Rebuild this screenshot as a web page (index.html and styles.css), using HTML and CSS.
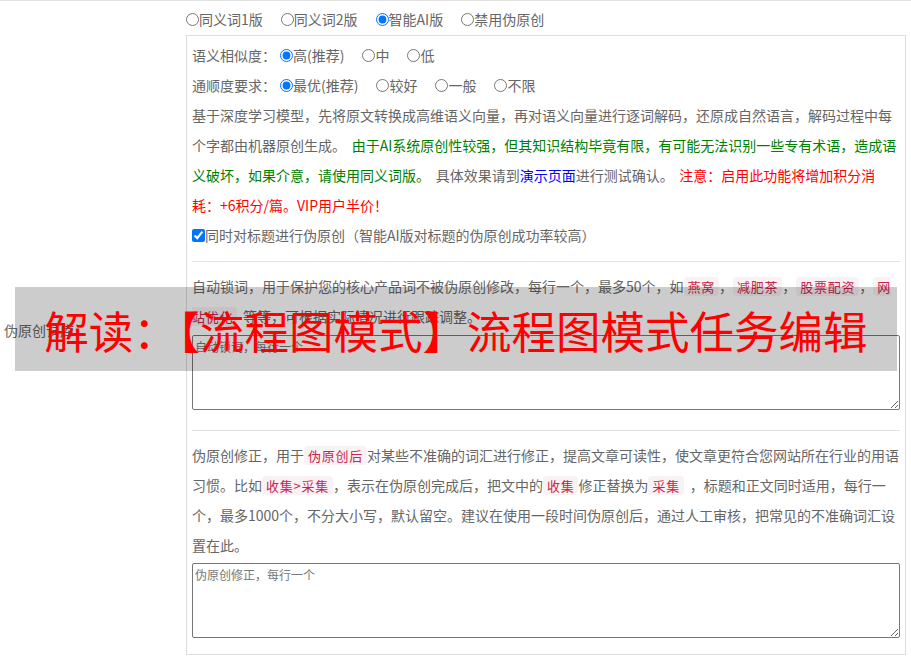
FILE: index.html
```html
<!DOCTYPE html>
<html lang="zh-CN">
<head>
<meta charset="utf-8">
<title>伪原创设置</title>
<link rel="stylesheet" href="styles.css">
</head>
<body>
<div class="form-row">
  <div class="row-label">伪原创词库</div>
  <div class="row-body">
    <div class="mode-row">
      <label class="opt"><input type="radio" name="mode">同义词1版</label>
      <label class="opt"><input type="radio" name="mode">同义词2版</label>
      <label class="opt"><input type="radio" name="mode" checked>智能AI版</label>
      <label class="opt"><input type="radio" name="mode">禁用伪原创</label>
    </div>
    <div class="panel">
      <div class="opt-row">
        <span class="opt-label">语义相似度：</span>
        <label class="opt"><input type="radio" name="sim" checked>高(推荐)</label>
        <label class="opt"><input type="radio" name="sim">中</label>
        <label class="opt"><input type="radio" name="sim">低</label>
      </div>
      <div class="opt-row">
        <span class="opt-label">通顺度要求：</span>
        <label class="opt"><input type="radio" name="flu" checked>最优(推荐)</label>
        <label class="opt"><input type="radio" name="flu">较好</label>
        <label class="opt"><input type="radio" name="flu">一般</label>
        <label class="opt"><input type="radio" name="flu">不限</label>
      </div>
      <p class="desc">基于深度学习模型，先将原文转换成高维语义向量，再对语义向量进行逐词解码，还原成自然语言，解码过程中每个字都由机器原创生成。 <span class="green">由于AI系统原创性较强，但其知识结构毕竟有限，有可能无法识别一些专有术语，造成语义破坏，如果介意，请使用同义词版。</span> 具体效果请到<a class="blue" href="#">演示页面</a>进行测试确认。 <span class="red">注意：启用此功能将增加积分消耗：+6积分/篇。VIP用户半价！</span></p>
      <label class="check-row"><input type="checkbox" checked>同时对标题进行伪原创（智能AI版对标题的伪原创成功率较高）</label>
      <hr class="sep sep-first">
      <p class="desc">自动锁词，用于保护您的核心产品词不被伪原创修改，每行一个，最多50个，如<code class="kw">燕窝</code>，<code class="kw">减肥茶</code>，<code class="kw">股票配资</code>，<code class="kw">网站优化</code> 等等，可根据实际情况进行跟踪调整。</p>
      <textarea class="words words-lock" placeholder="自动锁词，每行一个"></textarea>
      <hr class="sep sep-second">
      <p class="desc">伪原创修正，用于<code class="kw">伪原创后</code>对某些不准确的词汇进行修正，提高文章可读性，使文章更符合您网站所在行业的用语习惯。比如<code class="kw">收集&gt;采集</code>，表示在伪原创完成后，把文中的<code class="kw">收集</code>修正替换为<code class="kw">采集</code> ，标题和正文同时适用，每行一个，最多1000个，不分大小写，默认留空。建议在使用一段时间伪原创后，通过人工审核，把常见的不准确词汇设置在此。</p>
      <textarea class="words words-fix" placeholder="伪原创修正，每行一个"></textarea>
    </div>
  </div>
</div>
<div class="banner">解读：【流程图模式】流程图模式任务编辑</div>
</body>
</html>
```
FILE: styles.css
```css
* {
  box-sizing: border-box;
}

html {
  overflow: hidden;
}

html,
body {
  margin: 0;
  padding: 0;
  background: #fff;
}

body {
  position: relative;
  width: 911px;
  font-family: "Noto Sans CJK SC", "Microsoft YaHei", sans-serif;
  font-size: 14px;
  color: #666;
}

.form-row {
  display: flex;
  height: 659px;
  border-top: 1px solid #e2e2e2;
}

.row-label {
  flex: none;
  width: 186px;
  display: flex;
  align-items: center;
  padding-left: 4px;
}

.row-body {
  flex: none;
  width: 725px;
}

.mode-row {
  display: flex;
  align-items: center;
  height: 34px;
  padding-top: 2px;
}

.opt {
  display: inline-flex;
  align-items: center;
  height: 30px;
  margin-right: 18px;
  white-space: nowrap;
}

input[type="radio"],
input[type="checkbox"] {
  margin: 0;
  width: 13px;
  height: 13px;
  flex: none;
}

.panel {
  width: 720px;
  border: 1px solid #ddd;
  padding: 4px 5px 16px;
  line-height: 30px;
}

.opt-row {
  display: flex;
  align-items: center;
  height: 30px;
}

.opt-label {
  margin-right: 4px;
}

.desc {
  margin: 0;
  word-spacing: 2.5px;
}

.green {
  color: #008000;
}

.blue {
  color: #0000ff;
  text-decoration: none;
}

.red {
  color: #ff0000;
}

.check-row {
  display: flex;
  align-items: center;
  height: 30px;
}

.sep {
  height: 0;
  border: 0;
  border-top: 1px solid #e3e3e3;
}

.sep-first {
  margin: 11px 0 9px;
}

.sep-second {
  margin: 20px 0 9px;
}

.kw {
  font-family: "Noto Sans CJK SC", "Microsoft YaHei", sans-serif;
  font-size: 13px;
  line-height: 1;
  letter-spacing: 0.75px;
  word-spacing: 0;
  color: #c7254e;
  background: #f9f2f4;
  border-radius: 4px;
  padding: 0 4px;
}

.words {
  display: block;
  width: 708px;
  height: 75px;
  border: 1px solid #767676;
  border-radius: 2px;
  padding: 2px;
  font-family: "Noto Sans CJK SC", "Microsoft YaHei", sans-serif;
  font-size: 12px;
  color: #333;
  resize: both;
}

.words::placeholder {
  color: #777;
}

.words-lock {
  margin-top: 4px;
}

.words-fix {
  margin-top: 3px;
}

.banner {
  position: absolute;
  left: 15px;
  top: 287px;
  width: 882px;
  height: 84px;
  display: flex;
  align-items: center;
  justify-content: center;
  background: rgba(0, 0, 0, 0.2);
  color: #ff0000;
  font-size: 44.5px;
  white-space: nowrap;
}
```
